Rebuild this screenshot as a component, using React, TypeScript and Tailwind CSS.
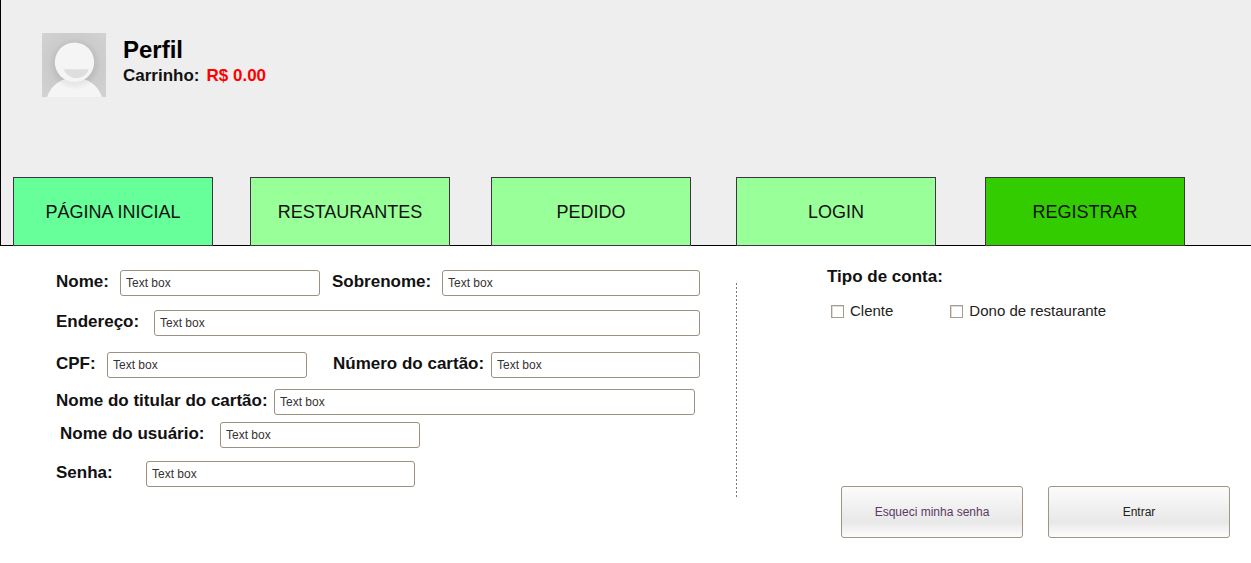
import type { ReactNode } from "react";

function Avatar() {
  return (
    <svg width="64" height="64" viewBox="0 0 64 64" role="img" aria-label="Avatar" className="shrink-0">
      <defs>
        <radialGradient id="backdrop" cx="50%" cy="50%" r="70%">
          <stop offset="0.4" stopColor="#c8c8c8" />
          <stop offset="0.8" stopColor="#cfcfcf" />
          <stop offset="1" stopColor="#d2d2d2" />
        </radialGradient>
        <radialGradient id="headShade" gradientUnits="userSpaceOnUse" cx="33" cy="31" r="26">
          <stop offset="0.74" stopColor="#000" stopOpacity="0.06" />
          <stop offset="1" stopColor="#000" stopOpacity="0" />
        </radialGradient>
      </defs>
      <rect width="64" height="64" fill="url(#backdrop)" />
      <path d="M5 64C9 52 19 45 32.500 45S56 52 60 64Z" fill="#f5f5f5" />
      <circle cx="33" cy="31" r="26" fill="url(#headShade)" />
      <circle cx="32.500" cy="29.300" r="19.700" fill="#f5f5f5" />
      <path d="M21.500 36.200H47C44.500 42 40 45 34.500 45S24 42 21.500 36.200Z" fill="#dedede" />
    </svg>
  );
}

const tabs = [
  { label: "PÁGINA INICIAL", style: "bg-[#66ff99]" },
  { label: "RESTAURANTES", style: "ml-[37px] bg-[#99ff99]" },
  { label: "PEDIDO", style: "ml-[41px] bg-[#99ff99]" },
  { label: "LOGIN", style: "ml-[45px] bg-[#99ff99]" },
  { label: "REGISTRAR", style: "ml-[49px] bg-[#33cc00]" },
];

function Field({ id, label, labelWidth, inputWidth }: { id: string; label: string; labelWidth: string; inputWidth: string }) {
  return (
    <>
      <label htmlFor={id} className={`shrink-0 pb-0.5 whitespace-nowrap text-[17px] leading-5 font-bold text-[#111] ${labelWidth}`}>
        {label}
      </label>
      <input
        id={id}
        type="text"
        defaultValue="Text box"
        className={`h-[26px] min-w-0 rounded-[3px] border border-[#9c9080] bg-white px-[5px] text-xs text-[#333] ${inputWidth}`}
      />
    </>
  );
}

function Check({ id, children }: { id: string; children: ReactNode }) {
  return (
    <div className="flex items-center gap-1.5">
      <input
        id={id}
        type="checkbox"
        className="size-[13px] appearance-none border border-[#a89c8e] bg-white shadow-[inset_1px_1px_0_#dedad5] checked:bg-[#6b6257]"
      />
      <label htmlFor={id} className="whitespace-nowrap text-[15px] leading-5 text-[#222]">
        {children}
      </label>
    </div>
  );
}

function ActionButton({ color, children }: { color: string; children: ReactNode }) {
  return (
    <button
      type="button"
      className={`h-[52px] w-[182px] rounded-[3px] border border-[#a09484] bg-[linear-gradient(#fcfcfc,#e8e8e8_70%,#fdfdfd)] text-xs ${color}`}
    >
      {children}
    </button>
  );
}

export default function App() {
  return (
    <div className="min-h-screen bg-white font-['Liberation_Sans',Arial,sans-serif] text-black">
      <header className="border-b border-l border-black bg-[#eeeeee] pt-[33px]">
        <div className="flex gap-[17px] pl-[41px]">
          <Avatar />
          <div className="pt-1">
            <h1 className="text-2xl leading-[26px] font-bold">Perfil</h1>
            <p className="flex gap-[7px] text-[17px] leading-[26px] font-bold text-[#111]">
              <span>Carrinho:</span>
              <span className="text-[#ff0000]">R$ 0.00</span>
            </p>
          </div>
        </div>
        <nav className="mt-20 -mb-px flex pl-3">
          {tabs.map((tab) => (
            <a
              key={tab.label}
              href="#"
              className={`flex h-[69px] w-[200px] items-center justify-center border border-[#3f3344] text-lg text-[#111] ${tab.style}`}
            >
              {tab.label}
            </a>
          ))}
        </nav>
      </header>

      <main className="grid grid-cols-[minmax(0,736fr)_1px_minmax(0,514fr)] items-start">
        <form className="pt-6 pr-9 pl-14">
          <div className="flex items-center">
            <Field id="nome" label="Nome:" labelWidth="w-16" inputWidth="w-[200px]" />
            <div className="ml-3 flex flex-1 items-center">
              <Field id="sobrenome" label="Sobrenome:" labelWidth="w-[110px]" inputWidth="flex-1" />
            </div>
          </div>
          <div className="mt-3.5 flex items-center">
            <Field id="endereco" label="Endereço:" labelWidth="w-[98px]" inputWidth="flex-1" />
          </div>
          <div className="mt-4 flex items-center">
            <Field id="cpf" label="CPF:" labelWidth="w-[51px]" inputWidth="w-[200px]" />
            <div className="ml-[26px] flex flex-1 items-center">
              <Field id="cartao" label="Número do cartão:" labelWidth="w-[158px]" inputWidth="flex-1" />
            </div>
          </div>
          <div className="mt-[11px] flex items-center pr-[5px]">
            <Field id="titular" label="Nome do titular do cartão:" labelWidth="w-[218px]" inputWidth="flex-1" />
          </div>
          <div className="mt-[7px] flex items-center pl-1">
            <Field id="usuario" label="Nome do usuário:" labelWidth="w-40" inputWidth="w-[200px]" />
          </div>
          <div className="mt-[13px] flex items-center">
            <Field id="senha" label="Senha:" labelWidth="w-[90px]" inputWidth="w-[269px]" />
          </div>
        </form>

        <div className="mt-[37px] h-[214px] bg-[repeating-linear-gradient(#777_0_2px,transparent_2px_4px)]" />

        <section className="pt-5 pr-[21px] pl-[90px]">
          <h2 className="text-[17px] leading-[22px] font-bold text-[#111]">Tipo de conta:</h2>
          <div className="mt-[13px] flex gap-[57px] pl-1">
            <Check id="cliente">Clente</Check>
            <Check id="dono">Dono de restaurante</Check>
          </div>
          <div className="mt-[165px] flex justify-end gap-[25px]">
            <ActionButton color="text-[#5b3a63]">Esqueci minha senha</ActionButton>
            <ActionButton color="text-[#222]">Entrar</ActionButton>
          </div>
        </section>
      </main>
    </div>
  );
}
